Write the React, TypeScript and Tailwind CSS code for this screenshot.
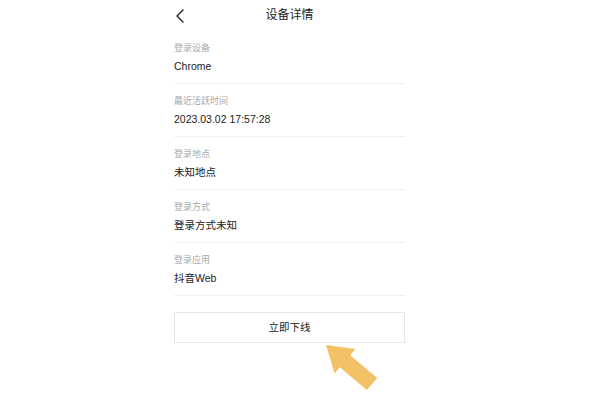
import { Fragment } from 'react';

const rows = [
  { label: '登录设备', value: 'Chrome' },
  { label: '最近活跃时间', value: '2023.03.02 17:57:28' },
  { label: '登录地点', value: '未知地点' },
  { label: '登录方式', value: '登录方式未知' },
  { label: '登录应用', value: '抖音Web' },
];

const App = () => {
  return (
    <div className="relative w-[607px] h-[405px] bg-white overflow-hidden font-['Liberation_Sans','Noto_Sans_CJK_SC',sans-serif]">
      <div className="ml-[174px] w-[231px]">
        {/* 顶部栏 */}
        <div className="relative h-[31px] flex items-start justify-center">
          <svg className="absolute left-[1px] top-[9px]" width="10" height="14" viewBox="0 0 10 14" fill="none">
            <path d="M8 1 L2 7 L8 13" stroke="#222" strokeWidth="1.4" strokeLinecap="round" strokeLinejoin="round" />
          </svg>
          <span className="mt-[7px] text-[12px] leading-[16px] text-[#222]">设备详情</span>
        </div>

        {rows.map((r) => (
          <Fragment key={r.label}>
            <div className="pt-[11px] pb-[10px] border-b border-[#f0f0f0]">
              <div className="text-[9px] leading-[12px] text-[#a8a8a8]">{r.label}</div>
              <div className="mt-[5px] text-[10.5px] leading-[14px] text-[#222]">{r.value}</div>
            </div>
          </Fragment>
        ))}

        <button className="mt-[16px] w-full h-[31px] border border-[#e6e6e6] flex items-center justify-center text-[10.5px] text-[#222]">
          立即下线
        </button>
      </div>

      {/* 指示箭头 */}
      <svg className="absolute left-0 top-0 pointer-events-none" width="607" height="405" viewBox="0 0 607 405">
        <polygon
          points="326,345 355.4,349 350.2,355.2 377.2,377.9 366.8,390.1 339.8,367.3 334.6,373.4"
          fill="#f3c166"
        />
      </svg>
    </div>
  );
};

export default App;
